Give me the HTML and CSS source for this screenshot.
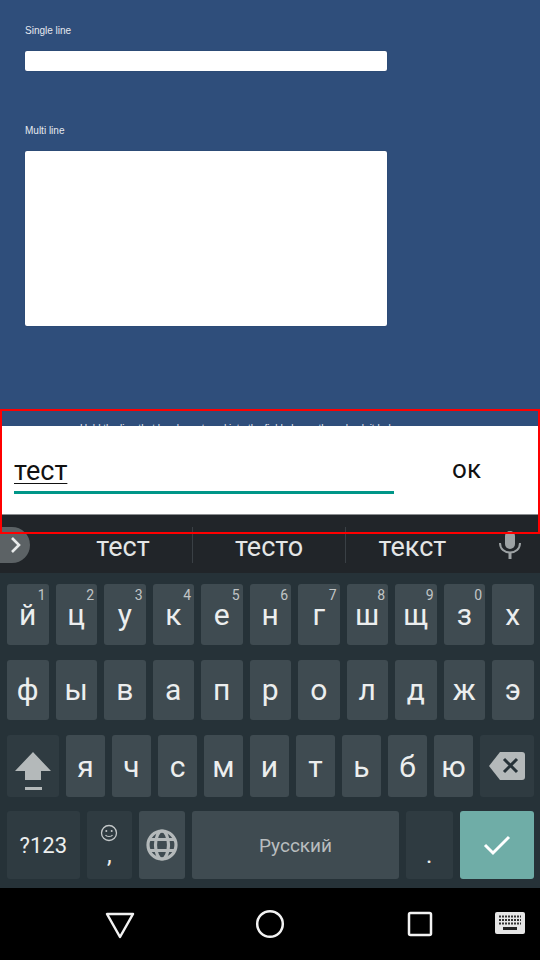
FILE: index.html
```html
<!DOCTYPE html>
<html>
    <head>
        <meta charset="utf-8">
        <title>Input fields</title>
        <link rel="stylesheet" href="styles.css">
    </head>
    <body>
        <div class="app">
            <div class="fieldLabel">Single line</div>
            <div class="field singleLine"></div>
            <div class="fieldLabel multiLabel">Multi line</div>
            <div class="field multiLine"></div>
            <div class="hiddenLabel">Hold the line that has been typed into the field above, then check it below</div>
        </div>

        <div class="inputBar">
            <div class="inputBox"><span class="inputText">тест</span></div>
            <div class="okBtn">ок</div>
        </div>

        <div class="suggestions">
            <div class="stripToggle">
                <svg width="14" height="20" viewBox="0 0 14 20"><path d="M3 3l7 7-7 7" fill="none" stroke="#e8eaea" stroke-width="2.6"/></svg>
            </div>
            <div class="word wordFirst">тест</div>
            <div class="word">тесто</div>
            <div class="word wordLast">текст</div>
            <div class="micBtn">
                <svg width="24" height="30" viewBox="0 0 24 30">
                    <rect x="7" y="1" width="10" height="18" rx="5" fill="#9da2a4"/>
                    <path d="M2 13c0 6 4.500 9.500 10 9.500s10-3.500 10-9.500" fill="none" stroke="#9da2a4" stroke-width="2"/>
                    <rect x="10.500" y="22" width="3" height="7" fill="#9da2a4"/>
                </svg>
            </div>
        </div>

        <div class="keyboard">
            <div class="keyRow">
                <div class="key letter">й<span class="hint">1</span></div>
                <div class="key letter">ц<span class="hint">2</span></div>
                <div class="key letter">у<span class="hint">3</span></div>
                <div class="key letter">к<span class="hint">4</span></div>
                <div class="key letter">е<span class="hint">5</span></div>
                <div class="key letter">н<span class="hint">6</span></div>
                <div class="key letter">г<span class="hint">7</span></div>
                <div class="key letter">ш<span class="hint">8</span></div>
                <div class="key letter">щ<span class="hint">9</span></div>
                <div class="key letter">з<span class="hint">0</span></div>
                <div class="key letter">х</div>
            </div>
            <div class="keyRow">
                <div class="key letter">ф</div>
                <div class="key letter">ы</div>
                <div class="key letter">в</div>
                <div class="key letter">а</div>
                <div class="key letter">п</div>
                <div class="key letter">р</div>
                <div class="key letter">о</div>
                <div class="key letter">л</div>
                <div class="key letter">д</div>
                <div class="key letter">ж</div>
                <div class="key letter">э</div>
            </div>
            <div class="keyRow rowThree">
                <div class="key func shiftKey">
                    <svg width="36" height="38" viewBox="0 0 36 38">
                        <path d="M18 0L36 19H26V28H10V19H0Z" fill="#b4b9ba"/>
                        <rect x="10" y="35" width="17" height="3" fill="#b4b9ba"/>
                    </svg>
                </div>
                <div class="key narrow">я</div>
                <div class="key narrow">ч</div>
                <div class="key narrow">с</div>
                <div class="key narrow">м</div>
                <div class="key narrow">и</div>
                <div class="key narrow">т</div>
                <div class="key narrow">ь</div>
                <div class="key narrow">б</div>
                <div class="key narrow">ю</div>
                <div class="key func backKey">
                    <svg width="36" height="28" viewBox="0 0 36 28">
                        <path d="M11 0H33a3 3 0 0 1 3 3V25a3 3 0 0 1-3 3H11L0 14Z" fill="#b4b9ba"/>
                        <path d="M15 7l13 13M28 7L15 20" stroke="#263238" stroke-width="3"/>
                    </svg>
                </div>
            </div>
            <div class="keyRow rowFour">
                <div class="key func symKey">?123</div>
                <div class="key func commaKey">
                    <svg width="18" height="18" viewBox="0 0 18 18">
                        <circle cx="9" cy="9" r="7.500" fill="none" stroke="#c4c8c9" stroke-width="1.300"/>
                        <circle cx="6.300" cy="7" r="1" fill="#c4c8c9"/>
                        <circle cx="11.700" cy="7" r="1" fill="#c4c8c9"/>
                        <path d="M5.500 11c1 2 6 2 7 0" fill="none" stroke="#c4c8c9" stroke-width="1.200"/>
                    </svg>
                    <span class="comma">,</span>
                </div>
                <div class="key globeKey">
                    <svg width="32" height="32" viewBox="0 0 32 32">
                        <g fill="none" stroke="#b4b9ba" stroke-width="3.200">
                            <circle cx="16" cy="16" r="14"/>
                            <ellipse cx="16" cy="16" rx="6.500" ry="14"/>
                            <path d="M3 10.500H29M3 21.500H29"/>
                        </g>
                    </svg>
                </div>
                <div class="key spaceKey">Русский</div>
                <div class="key func periodKey">.</div>
                <div class="key enterKey">
                    <svg width="28" height="22" viewBox="0 0 28 22"><path d="M2 11l8 8L26 3" fill="none" stroke="#fff" stroke-width="3"/></svg>
                </div>
            </div>
        </div>

        <div class="navBar">
            <svg class="navBack" width="30" height="28" viewBox="0 0 30 28"><path d="M2 2H28L15 25Z" fill="none" stroke="#f2f2f2" stroke-width="2.500" stroke-linejoin="round"/></svg>
            <svg class="navHome" width="30" height="30" viewBox="0 0 30 30"><circle cx="15" cy="15" r="12.800" fill="none" stroke="#f2f2f2" stroke-width="2.500"/></svg>
            <svg class="navRecent" width="26" height="26" viewBox="0 0 26 26"><rect x="2" y="2" width="22" height="22" rx="1.500" fill="none" stroke="#f2f2f2" stroke-width="2.500"/></svg>
            <svg class="navKeyboard" width="30" height="22" viewBox="0 0 30 22">
                <rect width="30" height="22" rx="2" fill="#e6e6e6"/>
                <path d="M4 4.500h22M4 8h22M4 11.500h22" stroke="#333" stroke-width="2" stroke-dasharray="2 1"/>
                <rect x="8" y="15" width="14" height="3" fill="#222"/>
            </svg>
        </div>

        <div class="debugFrame"></div>
    </body>
</html>
```

FILE: styles.css
```css
html, body{
    margin: 0;
    padding: 0;
}

body{
    position: relative;
    display: flex;
    flex-direction: column;
    width: 540px;
    height: 960px;
    overflow: hidden;
    font-family: 'Roboto', 'Liberation Sans', sans-serif;
    background-color: #000;
}

/* app behind the keyboard */
.app{
    box-sizing: border-box;
    height: 426px;
    padding: 25px 153px 0 25px;
    overflow: hidden;
    background-color: #2f4e7b;
    font-family: 'Liberation Sans', sans-serif;
    flex: none;
}
.fieldLabel{
    height: 12px;
    font-size: 10px;
    line-height: 12px;
    color: #e6e9ef;
}
.multiLabel{
    margin-top: 54px;
}
.field{
    margin-top: 14px;
    background-color: #fff;
    border-radius: 2px;
    box-shadow: 0 0 1px #1c3358;
}
.singleLine{
    height: 20px;
}
.multiLine{
    height: 175px;
}
.hiddenLabel{
    width: 315px;
    margin: 96px 0 0 55px;
    overflow: hidden;
    font-size: 10px;
    line-height: 14px;
    white-space: nowrap;
    color: #e6e9ef;
}

/* text input above the keyboard */
.inputBar{
    display: flex;
    flex: none;
    height: 88px;
    background-color: #fff;
}
.inputBox{
    box-sizing: border-box;
    width: 380px;
    height: 68px;
    margin-left: 14px;
    padding-top: 30px;
    border-bottom: 3px solid #009688;
}
.inputText{
    font-size: 27px;
    line-height: 30px;
    color: #111;
    text-decoration: underline;
    text-decoration-thickness: 1px;
    text-underline-offset: 3px;
}
.okBtn{
    width: 145px;
    padding-top: 28px;
    text-align: center;
    font-size: 26px;
    line-height: 30px;
    color: #111;
}

/* suggestion strip */
.suggestions{
    display: flex;
    flex: none;
    align-items: center;
    height: 59px;
    padding-top: 2px;
    border-top: 1px solid #8b8e90;
    box-sizing: border-box;
    background-color: #212529;
    color: #e4e6e6;
    font-size: 27px;
}
.stripToggle{
    display: flex;
    align-items: center;
    box-sizing: border-box;
    width: 30px;
    height: 36px;
    margin-right: 24px;
    padding-left: 9px;
    border-radius: 0 18px 18px 0;
    background-color: #5c6265;
    flex: none;
}
.word{
    flex: none;
    width: 152px;
    height: 36px;
    line-height: 40px;
    text-align: center;
    border-right: 1px solid #3a4045;
}
.wordFirst{
    width: 138px;
}
.wordLast{
    width: 133px;
    border-right: 0;
}
.micBtn{
    display: flex;
    justify-content: center;
    flex: none;
    width: 40px;
    margin-left: 11px;
}

/* keyboard */
.keyboard{
    display: flex;
    flex-direction: column;
    flex: none;
    box-sizing: border-box;
    height: 315px;
    padding: 11px 6px 9px 7px;
    background-color: #263238;
}
.keyRow{
    display: flex;
    gap: 7px;
    height: 60.500px;
    margin-bottom: 15px;
}
.rowThree{
    height: 62px;
    margin-bottom: 14px;
}
.rowFour{
    height: 68px;
    margin-bottom: 0;
}
.key{
    position: relative;
    display: flex;
    flex: none;
    align-items: center;
    justify-content: center;
    width: 41.500px;
    border-radius: 3px;
    background-color: #3f4b51;
    color: #eceeee;
    font-size: 30px;
}
.func{
    background-color: #2f3b41;
}
.hint{
    position: absolute;
    top: 4px;
    right: 3px;
    font-size: 14px;
    line-height: 15px;
    color: #c1c5c6;
}
.narrow{
    width: 39px;
}
.shiftKey{
    width: 52px;
}
.shiftKey svg{
    margin-top: 10px;
}
.backKey{
    width: 54px;
}
.symKey{
    width: 72.500px;
    font-size: 22px;
}
.commaKey{
    flex-direction: column;
    width: 45.500px;
    font-size: 24px;
    line-height: 22px;
}
.comma{
    height: 22px;
    margin-top: 2px;
}
.globeKey{
    width: 46px;
}
.spaceKey{
    width: 207px;
    font-size: 19px;
    color: #b9bdbf;
}
.periodKey{
    width: 46.500px;
    padding-top: 20px;
    box-sizing: border-box;
    font-size: 24px;
}
.enterKey{
    width: 74px;
    background-color: #6fada7;
}

/* system nav */
.navBar{
    position: relative;
    display: flex;
    flex: none;
    height: 72px;
    background-color: #000;
}
.navBar svg{
    position: absolute;
}
.navBack{
    left: 105px;
    top: 24px;
}
.navHome{
    left: 255px;
    top: 21px;
}
.navRecent{
    left: 407px;
    top: 23px;
}
.navKeyboard{
    left: 495px;
    top: 24px;
}

.debugFrame{
    position: absolute;
    top: 409px;
    left: 0;
    box-sizing: border-box;
    width: 540px;
    height: 125px;
    border: 2px solid #f00;
}
```
